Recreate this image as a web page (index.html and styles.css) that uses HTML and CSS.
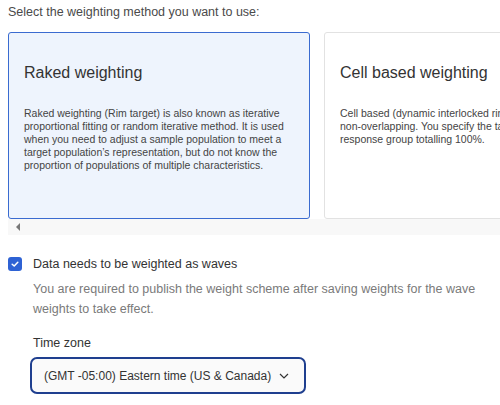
FILE: index.html
```html
<!DOCTYPE html>
<html>
<head>
<meta charset="utf-8">
<link rel="stylesheet" href="styles.css">
</head>
<body>
<div class="page">
  <p class="intro">Select the weighting method you want to use:</p>
  <div class="scroller">
    <div class="cards">
      <div class="card selected">
        <h2 class="card-title">Raked weighting</h2>
        <p class="card-desc">Raked weighting (Rim target) is also known as iterative proportional fitting or random iterative method. It is used when you need to adjust a sample population to meet a target population’s representation, but do not know the proportion of populations of multiple characteristics.</p>
      </div>
      <div class="card">
        <h2 class="card-title">Cell based weighting</h2>
        <p class="card-desc nowrap">Cell based (dynamic interlocked rim) weighting is used when groups are<br>non-overlapping. You specify the target proportion for each<br>response group totalling 100%.</p>
      </div>
    </div>
    <div class="scrollbar"><span class="arrow-left"></span></div>
  </div>
  <div class="check-row">
    <span class="checkbox">
      <svg width="10" height="10" viewBox="0 0 10 10"><path d="M2.2 5.2 L4.2 7 L7.8 3.2" fill="none" stroke="#fff" stroke-width="1.5" stroke-linecap="round" stroke-linejoin="round"/></svg>
    </span>
    <span class="check-label">Data needs to be weighted as waves</span>
  </div>
  <p class="helper">You are required to publish the weight scheme after saving weights for the wave weights to take effect.</p>
  <div class="field">
    <label class="field-label">Time zone</label>
    <div class="select">
      <span class="select-text">(GMT -05:00) Eastern time (US &amp; Canada)</span>
      <svg width="10" height="6" viewBox="0 0 10 6"><path d="M1 1 L5 5 L9 1" fill="none" stroke="#333" stroke-width="1.2"/></svg>
    </div>
  </div>
</div>
</body>
</html>
```
FILE: styles.css
```css
html, body { margin: 0; padding: 0; background: #fff; }
body { font-family: "Liberation Sans", Arial, sans-serif; color: #333; overflow: hidden; width: 500px; height: 405px; }
.page { padding: 0 0 0 8px; }
.intro { margin: 0; padding-top: 4px; font-size: 12.5px; line-height: 16px; color: #4a4a4a; height: 28px; }
.scroller { overflow: hidden; }
.cards { display: flex; gap: 14px; width: 700px; }
.card { box-sizing: border-box; flex: 0 0 302px; height: 187px; border: 1px solid #e2e2e2; border-radius: 3px; background: #fff; padding: 0 0 0 15px; overflow: hidden; }
.card.selected { border-color: #3a6bd0; background: #eef4fd; }
.card-title { margin: 30px 0 0; font-weight: normal; font-size: 16px; line-height: 20px; color: #333; }
.card-desc { margin: 24px 0 0; font-size: 10.5px; line-height: 13px; color: #444; width: 272px; }
.card-desc.nowrap { white-space: nowrap; width: auto; }
.scrollbar { height: 16px; background: #f8f8f8; display: flex; align-items: center; padding-left: 8px; }
.arrow-left { width: 0; height: 0; border-top: 4px solid transparent; border-bottom: 4px solid transparent; border-right: 4px solid #777; }
.check-row { display: flex; align-items: center; margin-top: 22px; height: 14px; }
.checkbox { width: 14px; height: 14px; border-radius: 3px; background: #2e62d4; display: flex; align-items: center; justify-content: center; }
.check-label { margin-left: 11px; font-size: 12.5px; color: #333; }
.helper { margin: 8px 0 0 25px; font-size: 12.5px; line-height: 20px; color: #7a7a7a; width: 460px; }
.field { margin-left: 22px; margin-top: 16px; }
.field-label { display: block; margin-left: 3px; font-size: 12.5px; line-height: 16px; color: #333; }
.select { box-sizing: border-box; margin-top: 6px; width: 276px; height: 37px; border: 2px solid #1f3f8f; border-radius: 7px; background: #fafafa; display: flex; align-items: center; padding-left: 12px; gap: 8px; font-size: 12px; color: #333; }
.select-text { white-space: nowrap; }
```
